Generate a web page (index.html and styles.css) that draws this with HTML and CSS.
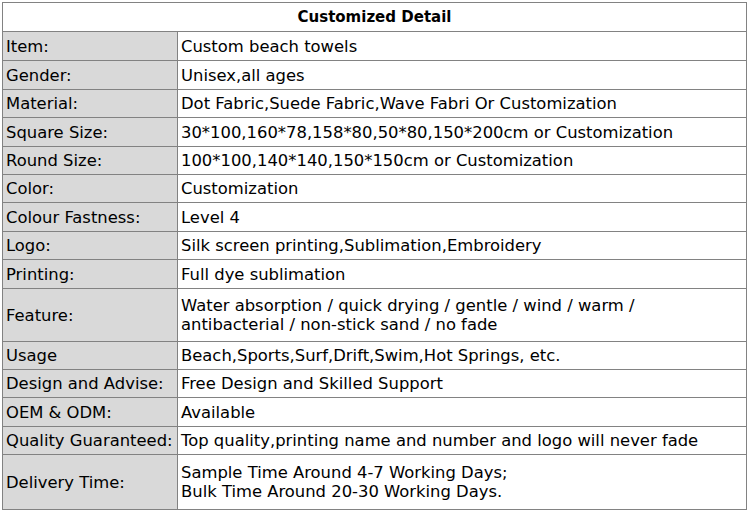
FILE: index.html
```html
<!DOCTYPE html>
<html>
<head>
<meta charset="utf-8">
<link rel="stylesheet" href="styles.css">
</head>
<body>
<table class="detail">
  <colgroup><col class="col-key"><col class="col-val"></colgroup>
  <tr class="h29"><th colspan="2" class="title">Customized Detail</th></tr>
  <tr class="h29"><td class="key">Item:</td><td class="val">Custom beach towels</td></tr>
  <tr class="h29"><td class="key">Gender:</td><td class="val">Unisex,all ages</td></tr>
  <tr class="h28"><td class="key">Material:</td><td class="val">Dot Fabric,Suede Fabric,Wave Fabri Or Customization</td></tr>
  <tr class="h29"><td class="key">Square Size:</td><td class="val">30*100,160*78,158*80,50*80,150*200cm or Customization</td></tr>
  <tr class="h28"><td class="key">Round Size:</td><td class="val">100*100,140*140,150*150cm or Customization</td></tr>
  <tr class="h28"><td class="key">Color:</td><td class="val">Customization</td></tr>
  <tr class="h29"><td class="key">Colour Fastness:</td><td class="val">Level 4</td></tr>
  <tr class="h28"><td class="key">Logo:</td><td class="val">Silk screen printing,Sublimation,Embroidery</td></tr>
  <tr class="h29"><td class="key">Printing:</td><td class="val">Full dye sublimation</td></tr>
  <tr class="h53"><td class="key">Feature:</td><td class="val">Water absorption / quick drying / gentle / wind / warm /<br>antibacterial / non-stick sand / no fade</td></tr>
  <tr class="h28"><td class="key">Usage</td><td class="val">Beach,Sports,Surf,Drift,Swim,Hot Springs, etc.</td></tr>
  <tr class="h28"><td class="key">Design and Advise:</td><td class="val">Free Design and Skilled Support</td></tr>
  <tr class="h29"><td class="key">OEM &amp; ODM:</td><td class="val">Available</td></tr>
  <tr class="h28"><td class="key">Quality Guaranteed:</td><td class="val">Top quality,printing name and number and logo will never fade</td></tr>
  <tr class="h55"><td class="key">Delivery Time:</td><td class="val">Sample Time Around 4-7 Working Days;<br>Bulk Time Around 20-30 Working Days.</td></tr>
</table>
</body>
</html>
```

FILE: styles.css
```css
html, body {
  margin: 0;
  padding: 0;
  background: #ffffff;
}
body {
  padding: 2px 0 0 2px;
}
.detail {
  width: 744px;
  border-collapse: collapse;
  table-layout: fixed;
  font-family: "DejaVu Sans", Verdana, sans-serif;
  font-size: 16.4px;
  line-height: 19px;
  color: #000000;
}
.col-key { width: 175px; }
.col-val { width: 569px; }
.detail th,
.detail td {
  border: 1px solid #828282;
  padding: 0 3px;
  vertical-align: middle;
  white-space: nowrap;
}
.title {
  background: #ffffff;
  font-weight: bold;
  font-size: 15px;
  text-align: center;
}
.key {
  background: #d9d9d9;
  text-align: left;
}
.val {
  background: #ffffff;
  text-align: left;
}
.h28 td { height: 27px; }
.h29 td, .h29 th { height: 28px; }
.h53 td { height: 52px; }
.h55 td { height: 54px; }
```
